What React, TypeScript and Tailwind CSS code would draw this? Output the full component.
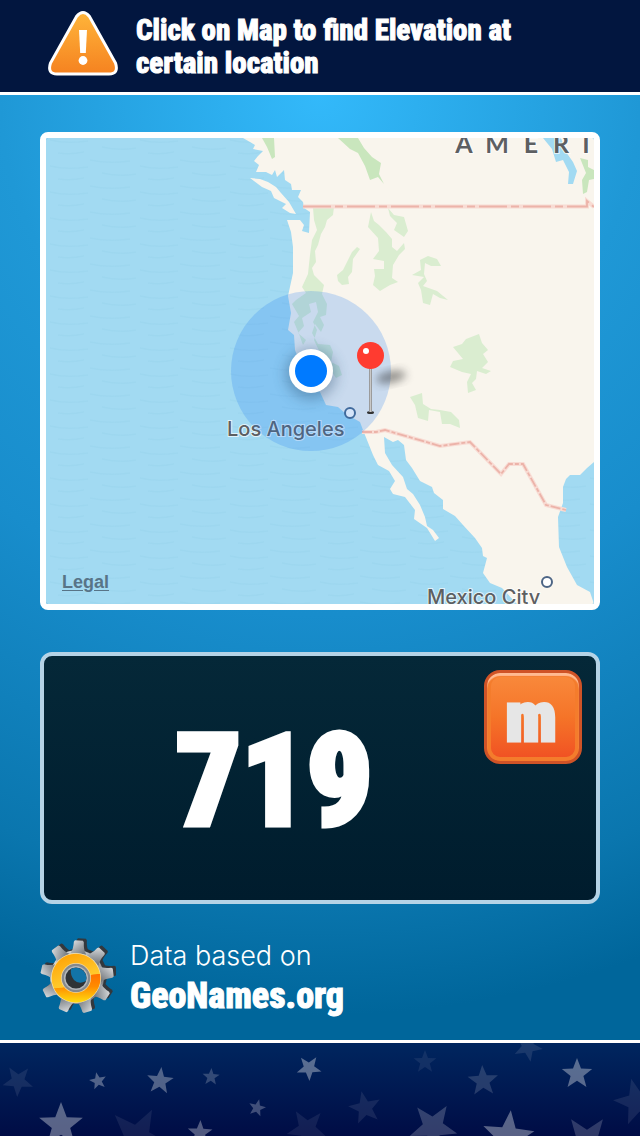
import React, { useState } from 'react'

const STAR = 'M0,-1 L0.25,-0.34 L0.95,-0.31 L0.4,0.13 L0.59,0.81 L0,0.42 L-0.59,0.81 L-0.4,0.13 L-0.95,-0.31 L-0.25,-0.34 Z'

// x, y, radius, rotation, opacity
const stars = [
  [18, 1081, 16, 183, 0.1],
  [98, 1081, 9, -12, 0.38],
  [160, 1081, 14, 6, 0.38],
  [211, 1077, 9, 3, 0.24],
  [309, 1068, 13, 178, 0.42],
  [257, 1108, 9, 14, 0.3],
  [61, 1125, 23, 0, 0.42],
  [137, 1138, 32, 28, 0.09],
  [200, 1133, 13, 2, 0.38],
  [307, 1129, 21, 184, 0.09],
  [365, 1108, 17, -12, 0.1],
  [425, 1062, 12, 0, 0.09],
  [483, 1081, 16, -3, 0.18],
  [528, 1047, 15, 170, 0.12],
  [577, 1074, 16, 0, 0.42],
  [637, 1102, 24, -14, 0.1],
  [433, 1127, 25, 177, 0.24],
  [508, 1137, 27, 6, 0.42],
  [587, 1141, 27, 180, 0.22],
]

const greens = [
  'M262,138 L274,138 L275,157 L272,159 L267,147 Z',
  'M338,138 L358,138 L364,148 L372,157 L381,163 L379,174 L384,184 L378,177 L370,180 L365,166 L358,153 L350,149 Z',
  'M580,158 L588,160 L588,167 L594,170 L594,179 L589,180 L587,192 L583,194 L582,180 L586,173 Z',
]

const forests = [
  'M313,208 L334,207 L333,215 L327,220 L325,227 L321,234 L318,245 L315,251 L316,262 L312,268 L314,275 L319,280 L324,285 L322,294 L327,304 L326,315 L320,317 L324,325 L321,332 L315,324 L312,333 L318,344 L330,345 L333,352 L331,362 L339,366 L342,375 L336,378 L328,366 L322,357 L314,340 L317,330 L313,322 L318,312 L316,302 L309,304 L311,312 L302,318 L304,326 L298,333 L306,340 L303,345 L299,334 L294,322 L299,316 L292,304 L296,300 L306,293 L302,287 L308,274 L310,255 L312,240 L317,230 L314,220 Z',
  'M357,247 L360,249 L353,259 L352,272 L348,277 L349,284 L342,285 L338,281 L337,275 L343,270 L347,262 L352,252 Z',
  'M371,212 L374,221 L379,225 L386,232 L392,239 L392,247 L397,251 L404,243 L405,249 L399,255 L393,265 L392,278 L398,282 L390,285 L380,291 L373,285 L375,276 L374,269 L384,269 L384,261 L373,259 L379,251 L378,238 L368,227 Z',
  'M388,208 L394,215 L404,217 L408,231 L404,237 L394,230 L397,223 L390,216 Z',
  'M420,260 L428,256 L437,259 L441,266 L431,266 L425,263 L424,274 L427,281 L423,286 L437,291 L448,300 L440,298 L433,294 L430,305 L423,303 L421,290 L418,283 L424,277 L412,275 L421,270 Z',
  'M479,334 L482,343 L488,350 L483,354 L488,362 L482,368 L491,371 L486,374 L477,371 L476,379 L472,383 L476,390 L468,393 L467,382 L471,374 L462,372 L450,367 L453,361 L463,359 L453,347 L462,344 L466,339 Z',
  'M410,397 L422,393 L423,404 L431,409 L440,410 L451,412 L459,420 L460,428 L450,424 L442,424 L440,412 L429,410 L428,421 L418,418 L415,405 Z',
]

const region = [
  ['A', 464],
  ['M', 497],
  ['E', 531],
  ['R', 561],
  ['I', 586],
]

const WarningIcon = () => (
  <svg viewBox="0 0 76 72" className="h-18 w-19 shrink-0" aria-hidden="true">
    <defs>
      <linearGradient id="warn" x1="0" y1="0" x2="0" y2="1">
        <stop offset="0" stopColor="#ffb53a" />
        <stop offset="1" stopColor="#f58220" />
      </linearGradient>
    </defs>
    <path
      d="M32.500 8.500 Q39 0.500 45.500 8.500 L71.500 55 Q75 66 65 66 L13 66 Q3 66 6.500 55 Z"
      fill="url(#warn)"
      stroke="#fff"
      strokeWidth="3"
    />
    <path d="M35 22 H43 L41.800 45 H36.200 Z" fill="#fff" />
    <circle cx="39" cy="52.500" r="4.400" fill="#fff" />
  </svg>
)

const GearIcon = () => (
  <svg viewBox="-38 -38 76 76" className="h-19 w-19 shrink-0" aria-hidden="true">
    <defs>
      <linearGradient id="steel" x1="0" y1="0" x2="1" y2="1">
        <stop offset="0" stopColor="#e6e7e8" />
        <stop offset="0.500" stopColor="#a5a9ad" />
        <stop offset="1" stopColor="#6c7075" />
      </linearGradient>
      <linearGradient id="gold" x1="0" y1="0" x2="0.400" y2="1">
        <stop offset="0" stopColor="#ff9c00" />
        <stop offset="0.600" stopColor="#ffc629" />
        <stop offset="1" stopColor="#ffdb3c" />
      </linearGradient>
      <linearGradient id="amber" x1="0" y1="0" x2="0" y2="1">
        <stop offset="0" stopColor="#ff7000" />
        <stop offset="0.450" stopColor="#ff8c00" />
        <stop offset="1" stopColor="#ffdc10" />
      </linearGradient>
      <g id="cog">
        <circle r="27" />
        {[0, 40, 80, 120, 160, 200, 240, 280, 320].map((a) => (
          <path key={a} d="M-8,-23 Q-5,-27 -5,-35 L-4,-36.500 L4,-36.500 L5,-35 Q5,-27 8,-23 Z" transform={`rotate(${a})`} />
        ))}
      </g>
    </defs>
    <use href="#cog" fill="#33383d" transform="translate(2 -1) rotate(3)" />
    <use href="#cog" fill="url(#steel)" transform="translate(-1 1) rotate(3)" />
    <g transform="translate(-2 2)">
      <circle r="25" fill="#f7e3b0" />
      <circle r="24.300" fill="url(#gold)" />
      <path d="M-22,10.300 Q-5,10 5,2 Q14,-5 24,-4 A24.300,24.300 0 0 1 -22,10.300 Z" fill="url(#amber)" />
      <circle r="15" fill="#f3d9a0" />
      <circle r="14.300" fill="#85898d" />
      <circle r="12" fill="#b4b7ba" />
      <circle r="10.500" fill="#2f3336" />
      <path d="M-5,-9 A10.500,10.500 0 0 1 10,3 Q3,7 -2,2 Q-6,-3 -5,-9 Z" fill="#1274a8" />
    </g>
  </svg>
)

const MapView = () => (
  <svg viewBox="46 138 548 466" className="block h-full w-full" role="img" aria-label="Map">
    <defs>
      <pattern id="waves" width="90" height="26" patternUnits="userSpaceOnUse">
        <path
          d="M0,4 Q18,8 40,5 M50,10 Q66,14 88,11 M12,17 Q30,21 46,18 M58,23 Q70,25 84,22"
          fill="none"
          stroke="#95d1ec"
          strokeWidth="1.500"
          opacity="0.400"
        />
      </pattern>
      <filter id="soft" x="-50%" y="-50%" width="200%" height="200%">
        <feGaussianBlur stdDeviation="4" />
      </filter>
      <filter id="glow" x="-50%" y="-50%" width="200%" height="200%">
        <feGaussianBlur stdDeviation="7" />
      </filter>
      <linearGradient id="needle">
        <stop offset="0" stopColor="#858585" />
        <stop offset="0.500" stopColor="#c8c8c8" />
        <stop offset="1" stopColor="#858585" />
      </linearGradient>
    </defs>
    <rect x="46" y="138" width="548" height="466" fill="#a2daf2" />
    <rect x="46" y="138" width="548" height="466" fill="url(#waves)" />

    {/* mainland */}
    <path
      d="M243,138 L250,142 L255,145 L253,149 L263,151 L258,156 L254,161 L259,165 L256,172 L266,172 L272,175 L275,170 L277,177 L284,170 L285,180 L291,184 L292,190 L301,190 L298,197 L303,202 L304,208 L310,212 L309,233 L302,231 L304,225 L300,220 L287,220 L291,232 L293,247 L293,273 L288,296 L291,313 L288,330 L294,335 L295,350 L302,368 L315,384 L320,392 L326,405 L338,407 L346,414 L360,422 L363,430 L373,455 L378,465 L389,471 L395,481 L390,489 L393,494 L405,497 L415,510 L414,519 L427,528 L435,541 L439,538 L433,530 L427,526 L425,517 L420,505 L413,494 L407,489 L403,477 L392,465 L385,453 L384,437 L393,442 L398,440 L404,445 L406,460 L412,468 L420,481 L432,487 L434,493 L443,500 L443,509 L455,516 L463,525 L475,538 L482,548 L483,556 L487,558 L483,573 L490,583 L502,588 L517,604 L594,604 L590,592 L577,585 L567,567 L559,547 L558,517 L563,503 L563,487 L566,479 L570,475 L580,475 L587,468 L594,462 L594,138 Z"
      fill="#f9f5ed"
    />
    <path d="M250,178 L260,179 L268,182 L276,187 L281,193 L289,202 L296,214 L290,213 L282,208 L286,204 L274,198 L271,191 L262,187 Z" fill="#f9f5ed" />
    <path d="M543,138 L561,138 L566,152 L573,162 L577,171 L573,184 L568,184 L569,172 L563,160 L556,162 L552,149 Z" fill="#a2daf2" />
    {greens.map((d) => (
      <path key={d} d={d} fill="#c9e6bd" />
    ))}
    {forests.map((d) => (
      <path key={d} d={d} fill="#daedd0" />
    ))}

    {/* borders */}
    <g fill="none">
      <g stroke="#f8dcd4" strokeWidth="4">
        <path d="M303,206.500 H587 V201 L594,207" />
        <path d="M362,432 L376,432 L385,430 L440,446 L470,442 L501,474 L509,464 L523,464 L546,505 L566,510" />
      </g>
      <g stroke="#ecb3a9" strokeWidth="1.800">
        <path d="M303,206.500 H587 V201 L594,207" strokeDasharray="28 4 8 4" />
        <path d="M362,432 L376,432 L385,430 L440,446 L470,442 L501,474 L509,464 L523,464 L546,505 L566,510" strokeDasharray="10 2 4 2" />
      </g>
    </g>

    <g fill="#5d5f62" stroke="#fff" strokeWidth="2" strokeOpacity="0.700" paintOrder="stroke">
      {region.map(([letter, x]) => (
        <text key={letter} x={x} y="153" textAnchor="middle" className="font-['Lato',sans-serif] text-[25px] font-bold">
          {letter}
        </text>
      ))}
      <text x="427" y="604" className="font-['Inter',sans-serif] text-[20px] font-medium">Mexico City</text>
      <text x="227" y="436" className="font-['Inter',sans-serif] text-[20px] font-medium">Los Angeles</text>
    </g>
    <circle cx="547" cy="582" r="5" fill="#fff" stroke="#4d6585" strokeWidth="2" />

    {/* current position */}
    <circle cx="311" cy="371" r="80" fill="#1e7cf0" opacity="0.220" />
    <circle cx="350" cy="413" r="5" fill="#d5e5fa" stroke="#406a9c" strokeWidth="2" />
    <circle cx="311" cy="374" r="25" fill="#28486b" opacity="0.400" filter="url(#glow)" />
    <circle cx="311" cy="371" r="22" fill="#fff" />
    <circle cx="311" cy="371" r="16" fill="#007aff" />

    {/* pin */}
    <ellipse cx="391" cy="377" rx="15" ry="6" fill="#333" opacity="0.500" filter="url(#soft)" transform="rotate(-12 391 377)" />
    <ellipse cx="370.500" cy="412.500" rx="3.500" ry="1.500" fill="#333" />
    <rect x="369" y="366" width="3" height="46" fill="url(#needle)" />
    <circle cx="370.500" cy="355.500" r="13.500" fill="#ff3b30" />
    <circle cx="366" cy="351" r="3" fill="#fff" />
  </svg>
)

const App = () => {
  const [metric, setMetric] = useState(true)

  return (
    <div className="flex min-h-screen flex-col bg-[#00669b] font-['Liberation_Sans',sans-serif] text-white">
      <header className="flex items-start gap-4 border-b-3 border-white bg-[#02163f] px-11 pt-2 pb-3">
        <WarningIcon />
        <h1 className="pt-1.5 font-['Roboto_Condensed',sans-serif] text-[29px] leading-[33px] font-extrabold [-webkit-text-stroke:1px_white]">
          Click on Map to find Elevation at
          <br />
          certain location
        </h1>
      </header>

      <main className="flex flex-1 flex-col bg-[radial-gradient(circle_at_50%_0,#33b9fa_0,#1f98d6_320px,#188dcc_520px,#0a76ae_800px,#00669b_920px)] px-10 pt-[37px]">
        <div className="relative aspect-[560/478] overflow-hidden rounded-lg border-6 border-white">
          <MapView />
          <a href="#legal" className="absolute bottom-3 left-4 text-lg leading-5 font-bold text-[#587487] underline underline-offset-2">
            Legal
          </a>
        </div>

        <section className="relative mt-[42px] flex h-63 items-center justify-center rounded-xl border-4 border-[#b5d3e6] bg-linear-to-b from-[#052838] to-[#001c2d]">
          <output className="pt-1.5 pr-23 font-['Roboto_Condensed',sans-serif] text-[128px] leading-none font-black [-webkit-text-stroke:5px_white]">
            719
          </output>
          <button
            type="button"
            onClick={() => setMetric(!metric)}
            className="absolute top-3.5 right-3.5 flex h-[94px] w-[98px] items-center justify-center rounded-2xl border-3 border-[#cf5327] bg-linear-to-b from-[#f98a3c] via-[#f57428] to-[#f04e23] pr-1 font-['Roboto_Condensed',sans-serif] text-[70px] leading-none font-black text-[#e6e6e6] shadow-[inset_0_3px_1px_#ffba92,inset_0_0_0_4px_#f47c2c] [-webkit-text-stroke:3px_#e6e6e6]"
          >
            {metric ? 'm' : 'ft'}
          </button>
        </section>

        <div className="flex items-center gap-3.5 pt-8 pb-6">
          <GearIcon />
          <p className="flex flex-col">
            <span className="font-['Inter',sans-serif] text-[27px] leading-10 font-light">Data based on</span>
            <a
              href="#geonames"
              className="font-['Roboto_Condensed',sans-serif] text-[36px] leading-10 font-extrabold [-webkit-text-stroke:1px_white]"
            >
              GeoNames.org
            </a>
          </p>
        </div>
      </main>

      <footer className="border-t-3 border-white bg-linear-to-b from-[#00265f] to-[#000c45]">
        <svg viewBox="0 1043 640 93" className="block w-full" aria-hidden="true">
          {stars.map(([x, y, r, a, o]) => (
            <path key={`${x}-${y}`} d={STAR} fill="#d5d8e0" opacity={o} transform={`translate(${x} ${y}) rotate(${a}) scale(${r})`} />
          ))}
        </svg>
      </footer>
    </div>
  )
}

export default App
